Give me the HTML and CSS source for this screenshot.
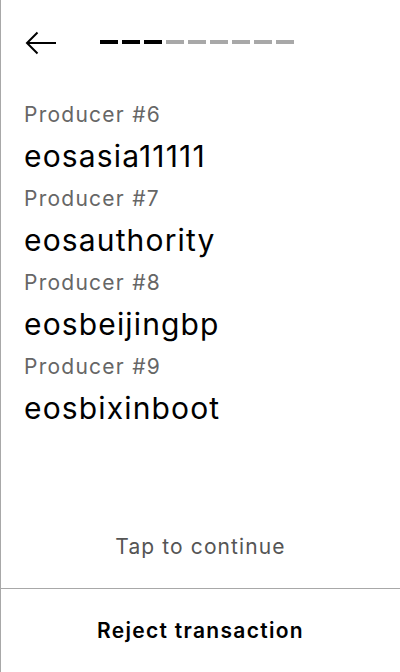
FILE: index.html
```html
<!DOCTYPE html>
<html>
<head>
<meta charset="utf-8">
<link rel="stylesheet" href="styles.css">
</head>
<body>
<div class="screen">
  <header class="header">
    <svg class="back" width="32" height="28" viewBox="0 0 32 28">
      <path d="M32 14 H3 M13.5 3.5 L3 14 L13.5 24.5" fill="none" stroke="#000" stroke-width="2"/>
    </svg>
    <div class="progress">
      <span class="dash on"></span><span class="dash on"></span><span class="dash on"></span>
      <span class="dash"></span><span class="dash"></span><span class="dash"></span>
      <span class="dash"></span><span class="dash"></span><span class="dash"></span>
    </div>
  </header>
  <main class="list">
    <div class="item"><div class="label">Producer #6</div><div class="value">eosasia11111</div></div>
    <div class="item"><div class="label">Producer #7</div><div class="value">eosauthority</div></div>
    <div class="item"><div class="label">Producer #8</div><div class="value">eosbeijingbp</div></div>
    <div class="item"><div class="label">Producer #9</div><div class="value">eosbixinboot</div></div>
  </main>
  <div class="tap">Tap to continue</div>
  <div class="reject">Reject transaction</div>
</div>
</body>
</html>
```
FILE: styles.css
```css
html, body {
  margin: 0;
  padding: 0;
  background: #fff;
}
body {
  font-family: Inter, "Noto Sans", sans-serif;
  color: #000;
}
.screen {
  width: 400px;
  height: 672px;
  box-sizing: border-box;
  border-left: 1px solid #a8a8a8;
  display: flex;
  flex-direction: column;
}
.header {
  height: 99px;
  box-sizing: border-box;
  padding: 29px 0 0 23px;
  display: flex;
  align-items: flex-start;
  gap: 44px;
}
.back {
  display: block;
}
.progress {
  display: flex;
  gap: 4px;
  margin-top: 11px;
}
.dash {
  width: 18px;
  height: 4px;
  background: #a8a8a8;
}
.dash.on {
  background: #000;
}
.list {
  flex: 1;
  padding-left: 23px;
}
.label {
  font-size: 21px;
  line-height: 30px;
  letter-spacing: 1.25px;
  color: #666;
}
.value {
  font-size: 30px;
  line-height: 53px;
  letter-spacing: 1.15px;
  color: #000;
}
.item .label {
  margin-top: 1px;
}
.tap {
  height: 84px;
  display: flex;
  align-items: center;
  justify-content: center;
  font-size: 21px;
  letter-spacing: 1.1px;
  color: #555;
}
.reject {
  height: 84px;
  box-sizing: border-box;
  border-top: 1px solid #a8a8a8;
  display: flex;
  align-items: center;
  justify-content: center;
  font-size: 21px;
  font-weight: 600;
  letter-spacing: 1.3px;
}
```
